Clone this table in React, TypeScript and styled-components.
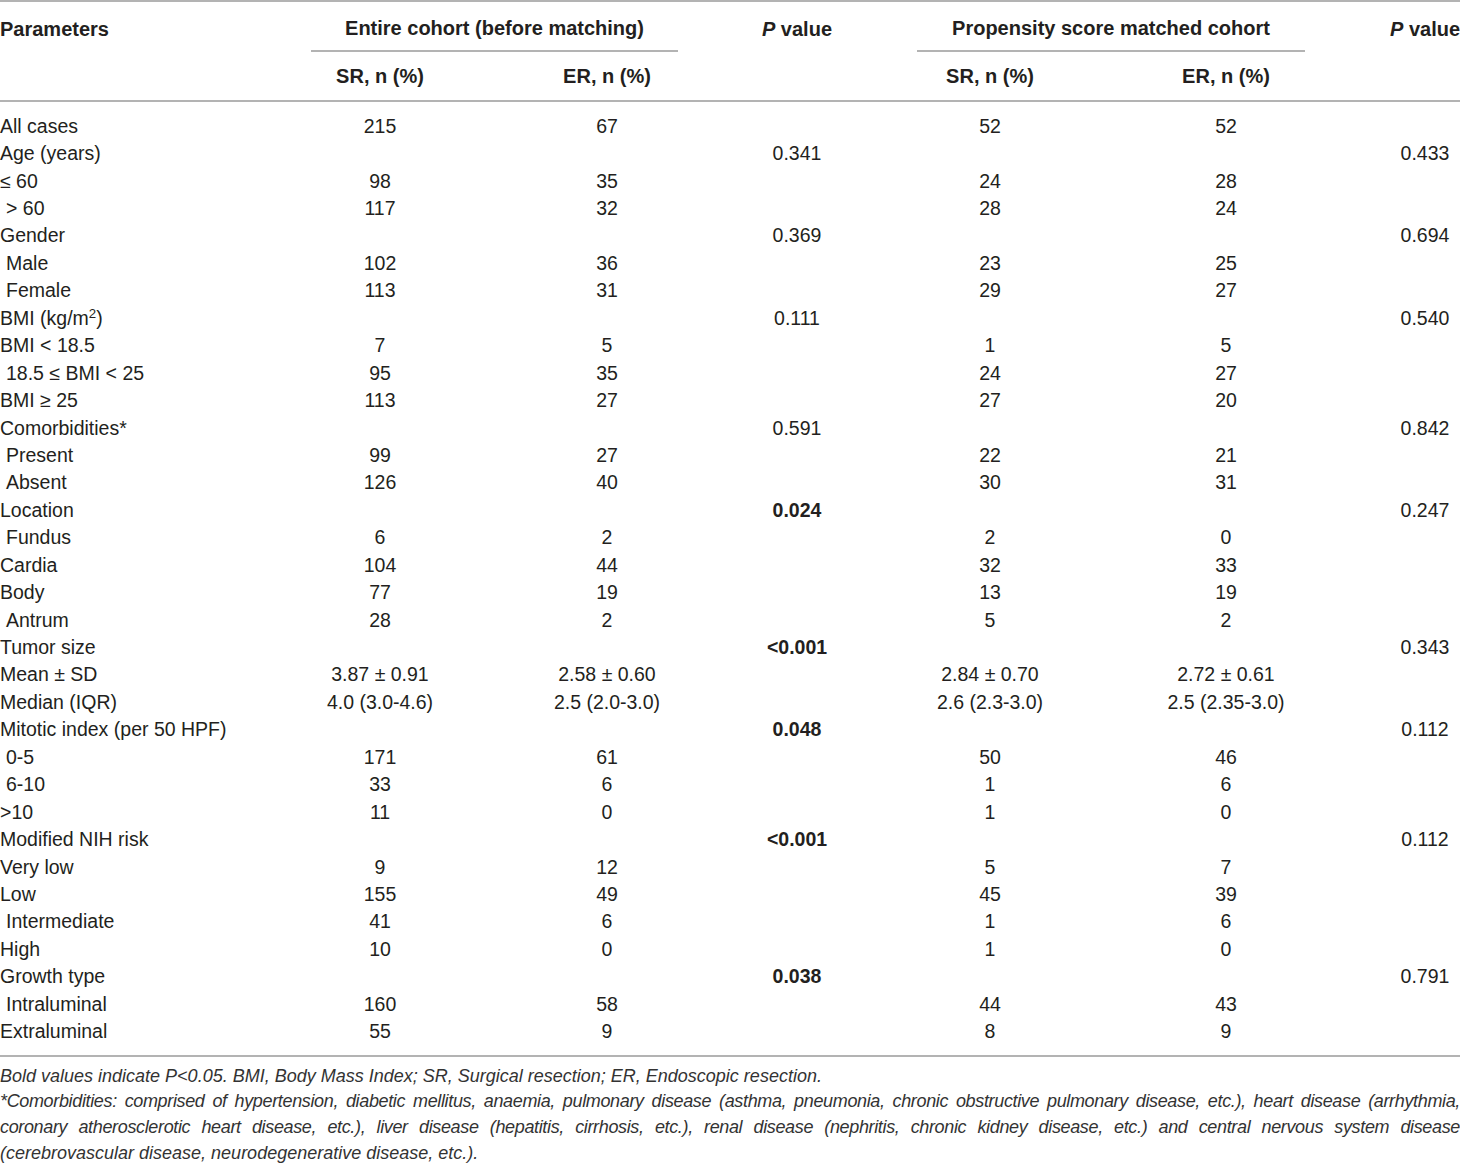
import React from "react";
import styled, { createGlobalStyle, css } from "styled-components";

const Global = createGlobalStyle`
  html, body { margin: 0; padding: 0; background: #ffffff; }
  body { font-family: "Liberation Sans", Arial, Helvetica, sans-serif; color: #231f20; }
`;

const columns = css`
  display: grid;
  grid-template-columns: 266px 228px 226px 154px 232px 240px 114px;
`;

const Page = styled.div`
  width: 1460px;
  background: #fff;
`;

const Table = styled.div`
  border-top: 2px solid #b3b3b3;
`;

const Head = styled.div`
  ${columns};
  grid-template-rows: 50px 48px;
  border-bottom: 2px solid #b3b3b3;
  font-weight: 700;
  font-size: 20px;
`;

const HeadCell = styled.div<{ $col: number; $row: number; $span?: number; $align?: string; $pad?: number }>`
  grid-column: ${(p) => p.$col} / span ${(p) => p.$span ?? 1};
  grid-row: ${(p) => p.$row};
  display: flex;
  align-items: center;
  justify-content: ${(p) => p.$align ?? "center"};
  padding-left: ${(p) => p.$pad ?? 0}px;
  padding-top: ${(p) => (p.$row === 1 ? 4 : 0)}px;
  white-space: nowrap;
`;

const GroupCell = styled(HeadCell)<{ $ml: number; $mr: number }>`
  margin: 0 ${(p) => p.$mr}px 0 ${(p) => p.$ml}px;
  border-bottom: 2px solid #b3b3b3;
`;

const Body = styled.div`
  padding: 10.5px 0 9.2px;
  border-bottom: 2px solid #b3b3b3;
`;

const Row = styled.div`
  ${columns};
  height: 27.45px;
  font-size: 19.5px;
  align-items: center;
`;

const Label = styled.div<{ $indent?: boolean }>`
  padding-left: ${(p) => (p.$indent ? 6 : 0)}px;
  white-space: nowrap;
`;

const Sup = styled.sup`
  font-size: 0.68em;
  line-height: 0;
`;

const Value = styled.div<{ $bold?: boolean; $pad?: number }>`
  text-align: center;
  white-space: nowrap;
  font-weight: ${(p) => (p.$bold ? 700 : 400)};
  padding-left: ${(p) => p.$pad ?? 0}px;
`;

const Notes = styled.div`
  padding-top: 7px;
  font-style: italic;
  font-size: 18px;
  line-height: 25.7px;
  color: #333;
`;

const NoteLine = styled.div<{ $justify?: boolean }>`
  white-space: ${(p) => (p.$justify ? "normal" : "nowrap")};
  letter-spacing: ${(p) => (p.$justify ? "-0.35px" : "0")};
  text-align: ${(p) => (p.$justify ? "justify" : "left")};
  text-align-last: ${(p) => (p.$justify ? "justify" : "left")};
`;

type R = {
  label: React.ReactNode;
  indent?: boolean;
  sr?: string;
  er?: string;
  p?: string;
  pb?: boolean;
  sr2?: string;
  er2?: string;
  p2?: string;
};

const rows: R[] = [
  { label: "All cases", sr: "215", er: "67", sr2: "52", er2: "52" },
  { label: "Age (years)", p: "0.341", p2: "0.433" },
  { label: "≤ 60", sr: "98", er: "35", sr2: "24", er2: "28" },
  { label: "> 60", indent: true, sr: "117", er: "32", sr2: "28", er2: "24" },
  { label: "Gender", p: "0.369", p2: "0.694" },
  { label: "Male", indent: true, sr: "102", er: "36", sr2: "23", er2: "25" },
  { label: "Female", indent: true, sr: "113", er: "31", sr2: "29", er2: "27" },
  { label: <>BMI (kg/m<Sup>2</Sup>)</>, p: "0.111", p2: "0.540" },
  { label: "BMI < 18.5", sr: "7", er: "5", sr2: "1", er2: "5" },
  { label: "18.5 ≤ BMI < 25", indent: true, sr: "95", er: "35", sr2: "24", er2: "27" },
  { label: "BMI ≥ 25", sr: "113", er: "27", sr2: "27", er2: "20" },
  { label: "Comorbidities*", p: "0.591", p2: "0.842" },
  { label: "Present", indent: true, sr: "99", er: "27", sr2: "22", er2: "21" },
  { label: "Absent", indent: true, sr: "126", er: "40", sr2: "30", er2: "31" },
  { label: "Location", p: "0.024", pb: true, p2: "0.247" },
  { label: "Fundus", indent: true, sr: "6", er: "2", sr2: "2", er2: "0" },
  { label: "Cardia", sr: "104", er: "44", sr2: "32", er2: "33" },
  { label: "Body", sr: "77", er: "19", sr2: "13", er2: "19" },
  { label: "Antrum", indent: true, sr: "28", er: "2", sr2: "5", er2: "2" },
  { label: "Tumor size", p: "<0.001", pb: true, p2: "0.343" },
  { label: "Mean ± SD", sr: "3.87 ± 0.91", er: "2.58 ± 0.60", sr2: "2.84 ± 0.70", er2: "2.72 ± 0.61" },
  { label: "Median (IQR)", sr: "4.0 (3.0-4.6)", er: "2.5 (2.0-3.0)", sr2: "2.6 (2.3-3.0)", er2: "2.5 (2.35-3.0)" },
  { label: "Mitotic index (per 50 HPF)", p: "0.048", pb: true, p2: "0.112" },
  { label: "0-5", indent: true, sr: "171", er: "61", sr2: "50", er2: "46" },
  { label: "6-10", indent: true, sr: "33", er: "6", sr2: "1", er2: "6" },
  { label: ">10", sr: "11", er: "0", sr2: "1", er2: "0" },
  { label: "Modified NIH risk", p: "<0.001", pb: true, p2: "0.112" },
  { label: "Very low", sr: "9", er: "12", sr2: "5", er2: "7" },
  { label: "Low", sr: "155", er: "49", sr2: "45", er2: "39" },
  { label: "Intermediate", indent: true, sr: "41", er: "6", sr2: "1", er2: "6" },
  { label: "High", sr: "10", er: "0", sr2: "1", er2: "0" },
  { label: "Growth type", p: "0.038", pb: true, p2: "0.791" },
  { label: "Intraluminal", indent: true, sr: "160", er: "58", sr2: "44", er2: "43" },
  { label: "Extraluminal", sr: "55", er: "9", sr2: "8", er2: "9" },
];

const PValueHead = () => (
  <span>
    <i>P</i>{" value"}
  </span>
);

export default function App() {
  return (
    <Page>
      <Global />
      <Table>
        <Head>
          <HeadCell $col={1} $row={1} $align="flex-start">Parameters</HeadCell>
          <GroupCell $col={2} $row={1} $span={2} $ml={45} $mr={42}>
            Entire cohort (before matching)
          </GroupCell>
          <HeadCell $col={4} $row={1}><PValueHead /></HeadCell>
          <GroupCell $col={5} $row={1} $span={2} $ml={43} $mr={41}>
            Propensity score matched cohort
          </GroupCell>
          <HeadCell $col={7} $row={1} $pad={44}><PValueHead /></HeadCell>
          <HeadCell $col={2} $row={2}>SR, n (%)</HeadCell>
          <HeadCell $col={3} $row={2}>ER, n (%)</HeadCell>
          <HeadCell $col={5} $row={2}>SR, n (%)</HeadCell>
          <HeadCell $col={6} $row={2}>ER, n (%)</HeadCell>
        </Head>
        <Body>
          {rows.map((r, i) => (
            <Row key={i}>
              <Label $indent={r.indent}>{r.label}</Label>
              <Value>{r.sr}</Value>
              <Value>{r.er}</Value>
              <Value $bold={r.pb}>{r.p}</Value>
              <Value>{r.sr2}</Value>
              <Value>{r.er2}</Value>
              <Value $pad={44}>{r.p2}</Value>
            </Row>
          ))}
        </Body>
      </Table>
      <Notes>
        <NoteLine>
          Bold values indicate P&lt;0.05. BMI, Body Mass Index; SR, Surgical resection; ER, Endoscopic resection.
        </NoteLine>
        <NoteLine $justify>
          *Comorbidities: comprised of hypertension, diabetic mellitus, anaemia, pulmonary disease (asthma, pneumonia,
          chronic obstructive pulmonary disease, etc.), heart disease (arrhythmia,
        </NoteLine>
        <NoteLine $justify>
          coronary atherosclerotic heart disease, etc.), liver disease (hepatitis, cirrhosis, etc.), renal disease
          (nephritis, chronic kidney disease, etc.) and central nervous system disease
        </NoteLine>
        <NoteLine>(cerebrovascular disease, neurodegenerative disease, etc.).</NoteLine>
      </Notes>
    </Page>
  );
}
